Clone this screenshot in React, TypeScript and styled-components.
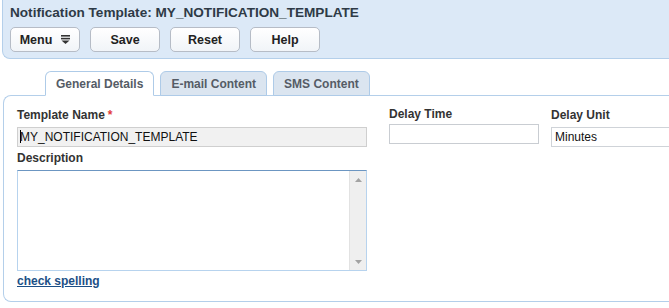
import React from 'react'
import styled, { createGlobalStyle } from 'styled-components'

const GlobalStyle = createGlobalStyle`
  html, body {
    margin: 0;
    padding: 0;
    background: #fff;
    font-family: "Liberation Sans", Arial, sans-serif;
    overflow: hidden;
  }
`

const Page = styled.div`
  width: 669px;
  height: 308px;
  overflow: hidden;
`

const Header = styled.div`
  margin-left: 2px;
  height: 59px;
  box-sizing: border-box;
  background: #dce9f7;
  border-left: 1px solid #b4cfea;
  border-bottom: 1px solid #b4cfea;
  border-bottom-left-radius: 8px;
  padding: 5px 0 0 7px;
`

const Title = styled.div`
  font-size: 13.6px;
  font-weight: bold;
  color: #2e3a46;
  line-height: 16px;
`

const Toolbar = styled.div`
  display: flex;
  gap: 10px;
  margin-top: 6px;
`

const Button = styled.button`
  width: 70px;
  height: 25px;
  box-sizing: border-box;
  border: 1px solid #b6bcc6;
  border-radius: 5px;
  background: linear-gradient(#ffffff, #f1f4f8);
  font-family: inherit;
  font-size: 12.5px;
  font-weight: bold;
  color: #222;
  padding: 0;
  display: flex;
  align-items: center;
  justify-content: center;
  gap: 9px;
`

const MenuIcon = () => (
  <svg width="9" height="9" viewBox="0 0 9 9">
    <rect x="0" y="0" width="9" height="1.6" fill="#333" />
    <rect x="0" y="2.8" width="9" height="1.6" fill="#333" />
    <polygon points="0.5,5.4 8.5,5.4 4.5,9" fill="#333" />
  </svg>
)

const TabRow = styled.div`
  display: flex;
  gap: 6px;
  margin-top: 12px;
  padding-left: 45px;
  position: relative;
  z-index: 1;
`

const Tab = styled.div<{ active?: boolean }>`
  height: 25px;
  box-sizing: border-box;
  padding: 0 10px;
  border: 1px solid #aecbe8;
  border-bottom: ${({ active }) => (active ? '1px solid #fff' : '1px solid #aecbe8')};
  border-radius: 6px 6px 0 0;
  background: ${({ active }) => (active ? '#fff' : '#dbe5f0')};
  font-size: 12px;
  font-weight: bold;
  color: #555c66;
  display: flex;
  align-items: center;
  margin-bottom: -1px;
`

const Panel = styled.div`
  margin-left: 3px;
  height: 207px;
  box-sizing: border-box;
  border: 1px solid #b4cfea;
  border-right: none;
  border-radius: 8px 0 0 8px;
  padding: 10px 0 0 13px;
  display: flex;
  gap: 22px;
`

const Column = styled.div<{ width: number; offset?: number; shift?: number }>`
  width: ${({ width }) => width}px;
  flex-shrink: 0;
  margin-top: ${({ offset }) => offset ?? 0}px;
  margin-left: ${({ shift }) => shift ?? 0}px;
`

const Label = styled.div<{ gapBelow?: number }>`
  font-size: 12px;
  font-weight: bold;
  color: #333;
  line-height: 15px;
  margin-bottom: ${({ gapBelow }) => gapBelow ?? 4}px;
`

const Required = styled.span`
  color: #e23b3b;
  margin-left: 3px;
`

const TextInput = styled.div<{ filled?: boolean }>`
  height: 20px;
  box-sizing: border-box;
  border: 1px solid ${({ filled }) => (filled ? '#cfcfcf' : '#c9cdd2')};
  background: ${({ filled }) => (filled ? '#f1f1f1' : '#fff')};
  font-size: 12px;
  color: #111;
  line-height: 18px;
  padding-left: 2px;
  margin-bottom: 4px;
  white-space: nowrap;
  overflow: hidden;
`

const Caret = styled.span`
  display: inline-block;
  width: 1px;
  height: 13px;
  background: #000;
  vertical-align: -2px;
  margin-right: -1px;
`

const TextArea = styled.div`
  height: 101px;
  box-sizing: border-box;
  border: 1px solid #b7d3ee;
  border-top-color: #6c96c2;
  display: flex;
  justify-content: flex-end;
`

const Scrollbar = styled.div`
  width: 16px;
  background: #efefef;
  border-left: 1px solid #e2e2e2;
  display: flex;
  flex-direction: column;
  justify-content: space-between;
  align-items: center;
  padding: 7px 0 6px;
`

const Arrow = ({ down }: { down?: boolean }) => (
  <svg width="7" height="4" viewBox="0 0 7 4">
    <polygon points={down ? '0,0 7,0 3.5,4' : '0,4 7,4 3.5,0'} fill="#a3a3a3" />
  </svg>
)

const Link = styled.a`
  display: inline-block;
  margin-top: 3px;
  font-size: 12px;
  font-weight: bold;
  color: #1c4f86;
  text-decoration: underline;
`

const Select = styled(TextInput)`
  border-color: #cfd3d8;
  border-right: none;
  padding-left: 3px;
`

export default function App() {
  return (
    <Page>
      <GlobalStyle />
      <Header>
        <Title>Notification Template: MY_NOTIFICATION_TEMPLATE</Title>
        <Toolbar>
          <Button>
            Menu <MenuIcon />
          </Button>
          <Button>Save</Button>
          <Button>Reset</Button>
          <Button>Help</Button>
        </Toolbar>
      </Header>
      <TabRow>
        <Tab active>General Details</Tab>
        <Tab>E-mail Content</Tab>
        <Tab>SMS Content</Tab>
      </TabRow>
      <Panel>
        <Column width={350} offset={2}>
          <Label>
            Template Name<Required>*</Required>
          </Label>
          <TextInput filled>
            <Caret />
            MY_NOTIFICATION_TEMPLATE
          </TextInput>
          <Label>Description</Label>
          <TextArea>
            <Scrollbar>
              <Arrow />
              <Arrow down />
            </Scrollbar>
          </TextArea>
          <Link href="#">check spelling</Link>
        </Column>
        <Column width={150} offset={1}>
          <Label gapBelow={2}>Delay Time</Label>
          <TextInput />
        </Column>
        <Column width={130} offset={2} shift={-10}>
          <Label>Delay Unit</Label>
          <Select>Minutes</Select>
        </Column>
      </Panel>
    </Page>
  )
}
